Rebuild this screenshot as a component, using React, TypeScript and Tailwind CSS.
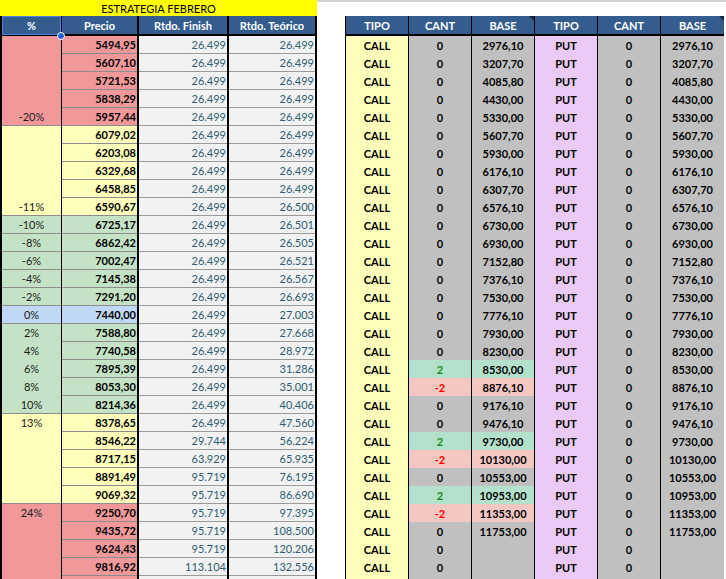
import React from 'react';

const RED = 'bg-[#f1999a]';
const YELLOW = 'bg-[#ffffbb]';
const GREEN = 'bg-[#c4e3c6]';
const BLUE = 'bg-[#c0d8f5]';

// precio, rtdo finish, rtdo teorico
const rows: [string, string, string][] = [
  ['5494,95', '26.499', '26.499'],
  ['5607,10', '26.499', '26.499'],
  ['5721,53', '26.499', '26.499'],
  ['5838,29', '26.499', '26.499'],
  ['5957,44', '26.499', '26.499'],
  ['6079,02', '26.499', '26.499'],
  ['6203,08', '26.499', '26.499'],
  ['6329,68', '26.499', '26.499'],
  ['6458,85', '26.499', '26.499'],
  ['6590,67', '26.499', '26.500'],
  ['6725,17', '26.499', '26.501'],
  ['6862,42', '26.499', '26.505'],
  ['7002,47', '26.499', '26.521'],
  ['7145,38', '26.499', '26.567'],
  ['7291,20', '26.499', '26.693'],
  ['7440,00', '26.499', '27.003'],
  ['7588,80', '26.499', '27.668'],
  ['7740,58', '26.499', '28.972'],
  ['7895,39', '26.499', '31.286'],
  ['8053,30', '26.499', '35.001'],
  ['8214,36', '26.499', '40.406'],
  ['8378,65', '26.499', '47.560'],
  ['8546,22', '29.744', '56.224'],
  ['8717,15', '63.929', '65.935'],
  ['8891,49', '95.719', '76.195'],
  ['9069,32', '95.719', '86.690'],
  ['9250,70', '95.719', '97.395'],
  ['9435,72', '95.719', '108.500'],
  ['9624,43', '95.719', '120.206'],
  ['9816,92', '113.104', '132.556'],
  ['', '', ''],
];

const rowBg = (i: number) => {
  if (i < 5) return RED;
  if (i < 10) return YELLOW;
  if (i < 15) return GREEN;
  if (i === 15) return BLUE;
  if (i < 21) return GREEN;
  if (i < 26) return YELLOW;
  return RED;
};

const bases = [
  '2976,10', '3207,70', '4085,80', '4430,00', '5330,00', '5607,70', '5930,00',
  '6176,10', '6307,70', '6576,10', '6730,00', '6930,00', '7152,80', '7376,10',
  '7530,00', '7776,10', '7930,00', '8230,00', '8530,00', '8876,10', '9176,10',
  '9476,10', '9730,00', '10130,00', '10553,00', '10953,00', '11353,00', '11753,00',
  '', '', '',
];

const cant: Record<number, number> = { 18: 2, 19: -2, 22: 2, 23: -2, 25: 2, 26: -2 };

const Header = ({ children, corner = false }: { children: React.ReactNode; corner?: boolean }) => (
  <div className="relative flex h-[20px] items-center justify-center border-b-2 border-black bg-[#345d8e] font-bold text-white">
    {children}
    {corner && (
      <div className="absolute right-0 top-0 h-0 w-0 border-l-[5px] border-t-[5px] border-l-transparent border-t-[#15253d]" />
    )}
  </div>
);

const PctBlock = ({ h, bg, label, at }: { h: string; bg: string; label: string; at: 'start' | 'end' }) => (
  <div className={`flex flex-col border-b border-[#8c8c8c] ${h} ${bg} ${at === 'end' ? 'justify-end' : 'justify-start'}`}>
    <div className="flex h-[17px] items-center justify-center">{label}</div>
  </div>
);

const PctCell = ({ bg, label, line = true }: { bg: string; label: string; line?: boolean }) => (
  <div className={`flex h-[18px] items-center justify-center border-b ${line ? 'border-[#8c8c8c]' : 'border-transparent'} ${bg}`}>
    {label}
  </div>
);

const LeftTable = () => (
  <div className="flex border-x-2 border-black">
    <div className="w-[60px] shrink-0 border-r border-black text-[#1a1a1a]">
      <div className="relative">
        <Header>%</Header>
        <div className="pointer-events-none absolute inset-x-0 top-0 h-[19px] border border-[#4f82dc]" />
        <div className="absolute -right-[4px] top-[16px] z-10 h-[8px] w-[8px] rounded-full border border-white bg-[#1d5fd3]" />
      </div>
      <PctBlock h="h-[90px]" bg={RED} label="-20%" at="end" />
      <PctBlock h="h-[90px]" bg={YELLOW} label="-11%" at="end" />
      <PctCell bg={GREEN} label="-10%" />
      <PctCell bg={GREEN} label="-8%" />
      <PctCell bg={GREEN} label="-6%" />
      <PctCell bg={GREEN} label="-4%" />
      <PctCell bg={GREEN} label="-2%" />
      <PctCell bg={BLUE} label="0%" />
      <PctCell bg={GREEN} label="2%" line={false} />
      <PctCell bg={GREEN} label="4%" line={false} />
      <PctCell bg={GREEN} label="6%" line={false} />
      <PctCell bg={GREEN} label="8%" line={false} />
      <PctCell bg={GREEN} label="10%" />
      <PctBlock h="h-[90px]" bg={YELLOW} label="13%" at="start" />
      <PctBlock h="h-[90px]" bg={RED} label="24%" at="start" />
    </div>

    <div className="w-[77px] shrink-0 border-r-2 border-black">
      <Header>Precio</Header>
      {rows.map(([p], i) => (
        <div key={i} className={`flex h-[18px] items-center justify-end border-b border-[#8c8c8c] pr-px font-bold text-black ${rowBg(i)}`}>
          {p}
        </div>
      ))}
    </div>

    <div className="w-[90px] shrink-0 border-r-2 border-black">
      <Header>Rtdo. Finish</Header>
      {rows.map(([, f], i) => (
        <div key={i} className="flex h-[18px] items-center justify-end border-b border-[#9a9a9a] bg-[#f2f2f2] pr-px text-[#2e5d71]">
          {f}
        </div>
      ))}
    </div>

    <div className="w-[86px] shrink-0">
      <Header>Rtdo. Teórico</Header>
      {rows.map(([, , t], i) => (
        <div key={i} className="flex h-[18px] items-center justify-end border-b border-[#9a9a9a] bg-[#f2f2f2] pr-px text-[#2e5d71]">
          {t}
        </div>
      ))}
    </div>
  </div>
);

const cantBg = (i: number) => {
  if (cant[i] === 2) return 'bg-[#b4e1cc]';
  if (cant[i] === -2) return 'bg-[#f4c7c3]';
  return 'bg-[#c0c0c0]';
};

const cantText = (i: number) => {
  if (cant[i] === 2) return 'text-[#138a13]';
  if (cant[i] === -2) return 'text-[#ff0000]';
  return 'text-black';
};

const Cell = ({ className, children }: { className: string; children?: React.ReactNode }) => (
  <div className={`flex h-[18px] items-center justify-center font-bold ${className}`}>{children}</div>
);

const RightTable = () => (
  <div className="flex border-l border-black">
    {/* CALL side */}
    <div className="w-[63px] border-r border-black bg-[#ffffbb]">
      <Header>TIPO</Header>
      {bases.map((_, i) => (
        <Cell key={i} className="text-black">{i < 30 ? 'CALL' : ''}</Cell>
      ))}
    </div>
    <div className="w-[63px] border-r border-black bg-[#c0c0c0]">
      <Header>CANT</Header>
      {bases.map((_, i) => (
        <Cell key={i} className={`${cantBg(i)} ${cantText(i)}`}>{i < 30 ? String(cant[i] ?? 0) : ''}</Cell>
      ))}
    </div>
    <div className="w-[63px] border-r border-black bg-[#c0c0c0]">
      <Header corner>BASE</Header>
      {bases.map((b, i) => (
        <Cell key={i} className={`${cantBg(i)} text-black`}>{b}</Cell>
      ))}
    </div>
    {/* PUT side */}
    <div className="w-[63px] border-r border-black bg-[#ebcbf5]">
      <Header>TIPO</Header>
      {bases.map((_, i) => (
        <Cell key={i} className="text-black">{i < 30 ? 'PUT' : ''}</Cell>
      ))}
    </div>
    <div className="w-[63px] border-r border-black bg-[#c0c0c0]">
      <Header>CANT</Header>
      {bases.map((_, i) => (
        <Cell key={i} className="text-black">{i < 30 ? '0' : ''}</Cell>
      ))}
    </div>
    <div className="w-[63px] bg-[#c0c0c0]">
      <Header corner>BASE</Header>
      {bases.map((b, i) => (
        <Cell key={i} className="text-black">{b}</Cell>
      ))}
    </div>
  </div>
);

export default function App() {
  return (
    <div className="h-[579px] w-[726px] overflow-hidden bg-white font-['Lato','Liberation_Sans',sans-serif] text-[11px] leading-none">
      <div className="flex">
        <div className="w-[317px] shrink-0">
          <div className="flex h-[16px] items-center justify-center bg-[#ffff00] text-black">ESTRATEGIA FEBRERO</div>
          <LeftTable />
        </div>
        <div className="flex-1 border-t-2 border-[#d4d4d4] pl-[28px] pt-[14px]">
          <RightTable />
        </div>
      </div>
    </div>
  );
}
